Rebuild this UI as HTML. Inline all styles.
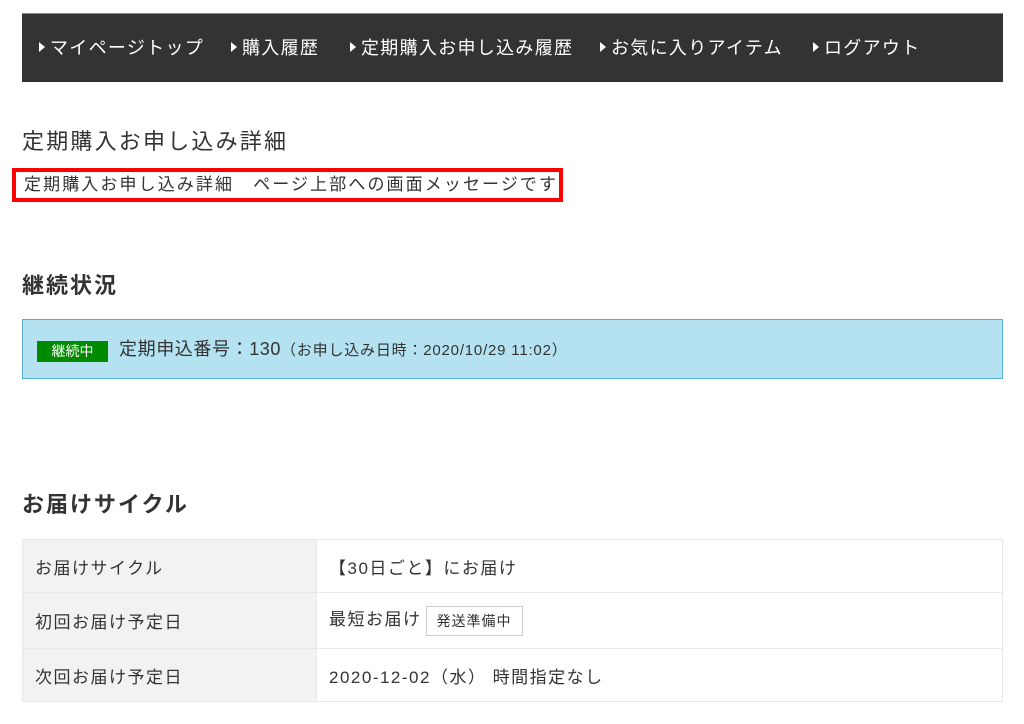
<!DOCTYPE html>
<html><head><meta charset="utf-8"><style>
*{margin:0;padding:0;box-sizing:border-box}
body{width:1024px;height:724px;background:#fff;font-family:"Liberation Sans","Noto Sans CJK JP",sans-serif;color:#333;position:relative;overflow:hidden}
.nav{position:absolute;left:22px;top:13px;width:981px;height:69px;background:#333;border-top:1px solid #888}
.nav span{position:absolute;top:22px;color:#fff;font-size:18px;line-height:24px;white-space:nowrap;letter-spacing:1.3px}
.nav span:before{content:"";display:inline-block;width:0;height:0;border-left:6px solid #fff;border-top:5px solid transparent;border-bottom:5px solid transparent;margin-right:5px;vertical-align:2px}
.abs{position:absolute;white-space:nowrap}
.msg{position:absolute;left:12px;top:168px;width:551px;height:34px;border:4px solid #f00;font-size:17px;line-height:26px;padding-left:8px;letter-spacing:2.1px;white-space:nowrap;overflow:hidden}
.h2{font-size:22px;font-weight:bold;left:22px;letter-spacing:2px}
.blue{position:absolute;left:22px;top:319px;width:981px;height:60px;background:#b4e2f0;border:1px solid #5aaed0}
.badge{position:absolute;left:14px;top:21px;width:71px;height:21px;background:#008a00;color:#fff;font-size:14px;line-height:21px;text-align:center}
table{position:absolute;left:22px;top:539px;width:981px;border-collapse:collapse;font-size:17px;letter-spacing:1.5px}
td{border:1px solid #e8e8e8;padding:0 12px;height:53px}
td.l{background:#f2f2f2;width:294px}
.tag{display:inline-block;border:1px solid #ccc;font-size:14px;padding:4px 10px;margin-left:4px;vertical-align:middle;letter-spacing:1px}
</style></head><body>
<div class="nav">
<span style="left:17px">マイページトップ</span>
<span style="left:209px">購入履歴</span>
<span style="left:328px">定期購入お申し込み履歴</span>
<span style="left:578px">お気に入りアイテム</span>
<span style="left:791px">ログアウト</span>
</div>
<div class="abs" style="left:22px;top:127px;font-size:22px;line-height:30px;letter-spacing:2.2px">定期購入お申し込み詳細</div>
<div class="msg">定期購入お申し込み詳細　ページ上部への画面メッセージです</div>
<div class="abs h2" style="top:271px;line-height:30px">継続状況</div>
<div class="blue"><div class="badge">継続中</div>
<div class="abs" style="left:96px;top:17px;font-size:18px;line-height:24px;letter-spacing:0.6px">定期申込番号：130<span style="font-size:15px;letter-spacing:0.8px">（お申し込み日時：2020/10/29 11:02）</span></div></div>
<div class="abs h2" style="top:490px;line-height:30px">お届けサイクル</div>
<table>
<tr><td class="l">お届けサイクル</td><td>【30日ごと】にお届け</td></tr>
<tr style="height:56px"><td class="l">初回お届け予定日</td><td>最短お届け<span class="tag">発送準備中</span></td></tr>
<tr><td class="l">次回お届け予定日</td><td>2020-12-02（水） 時間指定なし</td></tr>
</table>
</body></html>
